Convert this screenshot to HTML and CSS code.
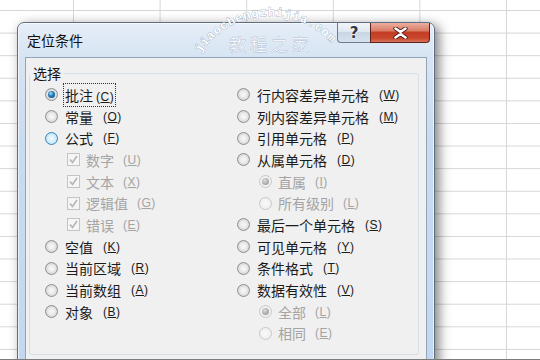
FILE: index.html
```html
<!DOCTYPE html>
<html lang="zh-CN">
<head>
    <meta charset="UTF-8">
    <title>定位条件</title>
    <link rel="stylesheet" href="styles.css">
</head>
<body>

    <!-- 定位条件 对话框 -->
    <div class="dialog">
        <div class="titlebar">
            <span class="title">定位条件</span>
            <div class="caption-btns">
                <span class="btn-help">?</span>
                <span class="btn-close">
                    <svg width="15" height="12" viewBox="0 0 15 12">
                        <path d="M2.5 1.5 L7.5 5 L12.5 1.5 M2.5 10.5 L7.5 7 L12.5 10.5" fill="none" stroke="#4a1510" stroke-width="4.2" stroke-linecap="round"/>
                        <path d="M2.5 1.5 L7.5 5 L12.5 1.5 M2.5 10.5 L7.5 7 L12.5 10.5" fill="none" stroke="#fff" stroke-width="2.6" stroke-linecap="round"/>
                    </svg>
                </span>
            </div>
        </div>

        <div class="client">
            <fieldset class="group">
                <legend>选择</legend>
                <div class="cols">
                    <!-- 左列 -->
                    <div class="col">
                        <div class="opt"><i class="radio checked"></i><span class="focus">批注<span class="key">(<u>C</u>)</span></span></div>
                        <div class="opt"><i class="radio"></i>常量<span class="key">(<u>O</u>)</span></div>
                        <div class="opt"><i class="radio hot"></i>公式<span class="key">(<u>F</u>)</span></div>
                        <div class="opt sub off"><i class="check"><svg width="9" height="9" viewBox="0 0 9 9"><path d="M1 4.5 L3.5 7.5 L8 1" fill="none" stroke="#b4b4b4" stroke-width="1.6"/></svg></i>数字<span class="key">(<u>U</u>)</span></div>
                        <div class="opt sub off"><i class="check"><svg width="9" height="9" viewBox="0 0 9 9"><path d="M1 4.5 L3.5 7.5 L8 1" fill="none" stroke="#b4b4b4" stroke-width="1.6"/></svg></i>文本<span class="key">(<u>X</u>)</span></div>
                        <div class="opt sub off"><i class="check"><svg width="9" height="9" viewBox="0 0 9 9"><path d="M1 4.5 L3.5 7.5 L8 1" fill="none" stroke="#b4b4b4" stroke-width="1.6"/></svg></i>逻辑值<span class="key">(<u>G</u>)</span></div>
                        <div class="opt sub off"><i class="check"><svg width="9" height="9" viewBox="0 0 9 9"><path d="M1 4.5 L3.5 7.5 L8 1" fill="none" stroke="#b4b4b4" stroke-width="1.6"/></svg></i>错误<span class="key">(<u>E</u>)</span></div>
                        <div class="opt"><i class="radio"></i>空值<span class="key">(<u>K</u>)</span></div>
                        <div class="opt"><i class="radio"></i>当前区域<span class="key">(<u>R</u>)</span></div>
                        <div class="opt"><i class="radio"></i>当前数组<span class="key">(<u>A</u>)</span></div>
                        <div class="opt"><i class="radio"></i>对象<span class="key">(<u>B</u>)</span></div>
                    </div>

                    <!-- 右列 -->
                    <div class="col">
                        <div class="opt"><i class="radio"></i>行内容差异单元格<span class="key">(<u>W</u>)</span></div>
                        <div class="opt"><i class="radio"></i>列内容差异单元格<span class="key">(<u>M</u>)</span></div>
                        <div class="opt"><i class="radio"></i>引用单元格<span class="key">(<u>P</u>)</span></div>
                        <div class="opt"><i class="radio"></i>从属单元格<span class="key">(<u>D</u>)</span></div>
                        <div class="opt sub off"><i class="radio off checked"></i>直属<span class="key">(<u>I</u>)</span></div>
                        <div class="opt sub off"><i class="radio off"></i>所有级别<span class="key">(<u>L</u>)</span></div>
                        <div class="opt"><i class="radio"></i>最后一个单元格<span class="key">(<u>S</u>)</span></div>
                        <div class="opt"><i class="radio"></i>可见单元格<span class="key">(<u>Y</u>)</span></div>
                        <div class="opt"><i class="radio"></i>条件格式<span class="key">(<u>T</u>)</span></div>
                        <div class="opt"><i class="radio"></i>数据有效性<span class="key">(<u>V</u>)</span></div>
                        <div class="opt sub off"><i class="radio off checked"></i>全部<span class="key">(<u>L</u>)</span></div>
                        <div class="opt sub off"><i class="radio off"></i>相同<span class="key">(<u>E</u>)</span></div>
                    </div>
                </div>
            </fieldset>
        </div>
    </div>

    <!-- 水印：沿圆弧排列的网址 + 中文站名 -->
    <svg class="watermark" width="540" height="360" viewBox="0 0 540 360">
        <text class="wm-url"
              x="200.4 205.2 210.5 216.5 222.8 229.7 236.9 244.3 252.1 259.9 268 276 283.9 291.7 299.3 306.7 313.8 320.3 326.5"
              y="53 46.6 40.7 35.3 30.5 26.3 22.8 20 17.9 16.6 16 16.2 17.2 18.9 21.3 24.4 28.3 32.7 37.9"
              rotate="-56 -50.5 -45.1 -39.6 -34.2 -28.7 -23.2 -17.8 -12.3 -6.9 -1.4 4.1 9.5 15 20.4 25.9 31.4 36.8 42.3">jiaochengzhijia.com</text>
        <text class="wm-cn" x="229" y="51">教程之家</text>
    </svg>

</body>
</html>
```

FILE: styles.css
```css
* {
    margin: 0;
    padding: 0;
    box-sizing: border-box;
}

html, body {
    width: 540px;
    height: 360px;
    overflow: hidden;
}

/* 背后的表格 */
body {
    position: relative;
    padding: 22px 0 0 17px;
    font-family: "Noto Sans CJK SC", sans-serif;
    background-color: #fff;
    background-image:
        linear-gradient(to right, #d6d6d6 1px, transparent 1px),
        linear-gradient(to bottom, #d6d6d6 1px, transparent 1px);
    background-size: 86.6px 100%, 100% 22.6px;
    background-position: 73px 0, 0 10px;
}

body::after {
    content: "";
    position: absolute;
    left: 0;
    bottom: 0;
    width: 100%;
    height: 1px;
    background: #7c7c7c;
}

/* 窗口外框 */
.dialog {
    width: 418px;
    height: 360px;
    border: 1px solid #5f6e80;
    border-radius: 7px 7px 0 0;
    background: linear-gradient(to bottom, #e6eef8 0, #d8e5f3 30px, #c9dbef 120px, #c3d7ee 100%);
    box-shadow: 4px 3px 12px rgba(0, 0, 0, 0.5), inset 0 0 0 1px rgba(255, 255, 255, 0.6);
    display: flex;
    flex-direction: column;
}

.titlebar {
    height: 34px;
    display: flex;
    justify-content: space-between;
    align-items: flex-start;
    padding: 0 4px 0 9px;
}

.title {
    font-size: 14px;
    line-height: 34px;
    color: #111;
}

.caption-btns {
    display: flex;
}

.btn-help {
    width: 33px;
    height: 20px;
    border: 1px solid #6d7b8b;
    border-top: none;
    border-right: none;
    border-radius: 0 0 0 4px;
    background: linear-gradient(to bottom, #f1f5f9 0, #dfe7f0 45%, #c9d6e4 50%, #d7e2ee 100%);
    display: flex;
    justify-content: center;
    align-items: center;
    font: bold 15px "DejaVu Sans", sans-serif;
    color: #2e3a48;
    text-shadow: 0 0 2px #fff, 0 0 2px #fff;
}

.btn-close {
    width: 60px;
    height: 20px;
    border: 1px solid #5a2218;
    border-top: none;
    border-radius: 0 0 4px 0;
    background: linear-gradient(to bottom, #eab0a2 0, #db7d68 40%, #c43d24 50%, #c9472d 80%, #d8735c 100%);
    display: flex;
    justify-content: center;
    align-items: center;
}

/* 内容区域 */
.client {
    flex: 1;
    margin: 0 7px;
    border: 1px solid #91a4ba;
    background: #f0f0f0;
}

.group {
    margin: 7px 7px 0 3px;
    height: 290px;
    border: 1px solid #d5dfe5;
    border-radius: 3px;
}

.group legend {
    font-size: 14px;
    line-height: 16px;
    padding: 0 3px;
    color: #151515;
}

.cols {
    display: grid;
    grid-template-columns: 192px 1fr;
    padding: 3px 0 0 15px;
}

.opt {
    display: flex;
    align-items: center;
    gap: 7px;
    height: 21.7px;
    font-size: 14px;
    color: #1b1b1b;
    white-space: nowrap;
}

.opt.sub {
    padding-left: 22px;
    gap: 6px;
}

.opt.off {
    color: #a4a4a4;
}

.key {
    font-family: "Liberation Sans", sans-serif;
    font-size: 12px;
    letter-spacing: 0.5px;
    margin-left: 3px;
}

.focus {
    outline: 1px dotted #333;
    outline-offset: 1px;
}

/* 单选框 */
.radio {
    position: relative;
    flex: none;
    width: 13px;
    height: 13px;
    border-radius: 50%;
    border: 1px solid #8e9092;
    background: radial-gradient(circle, #f8f8f8 0, #ececec 40%, #d3d3d3 75%, #e6e6e6 100%);
}

.radio.checked::after {
    content: "";
    position: absolute;
    top: 2px;
    left: 2px;
    width: 7px;
    height: 7px;
    border-radius: 50%;
    background: radial-gradient(circle at 40% 35%, #a9def7 0, #2c80bf 40%, #0f4b82 85%);
}

.radio.hot {
    border-color: #3d80b3;
    background: radial-gradient(circle, #f2fbff 0, #d7effc 45%, #afdcf5 90%);
}

.radio.off {
    border-color: #c8c9ca;
    background: radial-gradient(circle, #fafafa 0, #f1f1f1 60%, #e6e6e6 100%);
}

.radio.off.checked::after {
    background: radial-gradient(circle at 40% 35%, #dedede 0, #a8a8a8 60%, #979797 100%);
}

/* 复选框 */
.check {
    flex: none;
    width: 13px;
    height: 13px;
    border: 1px solid #c4c4c4;
    background: #f5f5f5;
    display: flex;
    justify-content: center;
    align-items: center;
}

/* 水印 */
.watermark {
    position: absolute;
    left: 0;
    top: 0;
    pointer-events: none;
}

.wm-url {
    font: bold 12px "Liberation Mono", monospace;
    fill: #fff;
    stroke: rgba(100, 125, 160, 0.55);
    stroke-width: 0.9;
    paint-order: stroke;
}

.wm-cn {
    font: 300 17px "Noto Sans CJK SC", sans-serif;
    letter-spacing: 4px;
    fill: #fff;
    stroke: rgba(110, 135, 170, 0.45);
    stroke-width: 0.8;
    paint-order: stroke;
}
```
